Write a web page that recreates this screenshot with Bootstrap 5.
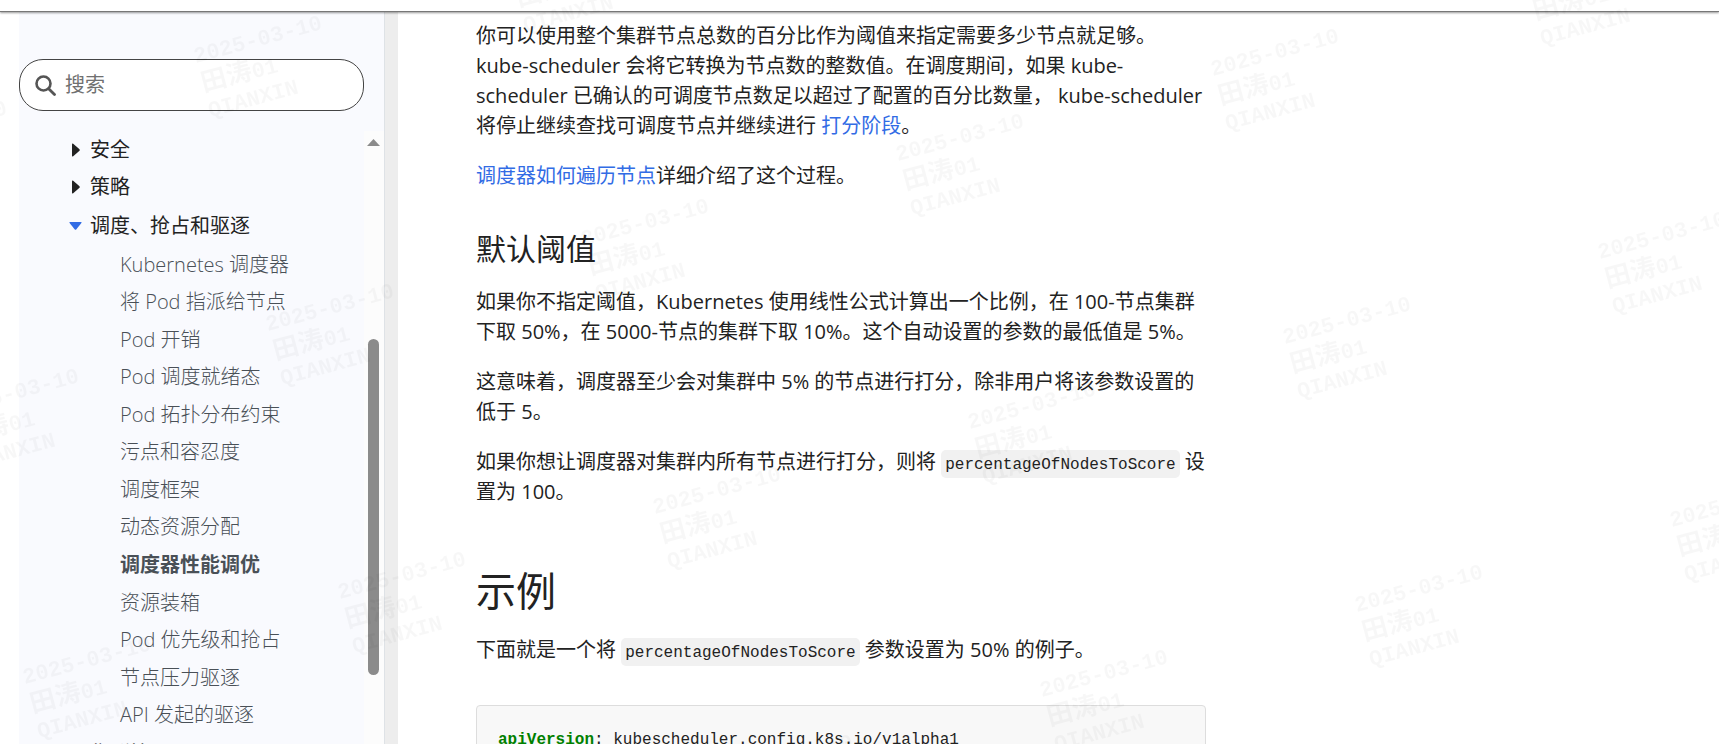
<!DOCTYPE html>
<html lang="zh-CN">
<head>
<meta charset="utf-8">
<meta name="viewport" content="width=device-width, initial-scale=1">
<title>调度器性能调优 | Kubernetes</title>
<link href="https://cdn.jsdelivr.net/npm/bootstrap@5.3.0/dist/css/bootstrap.min.css" rel="stylesheet">
<style>
  body { font-family: "Open Sans", "Noto Sans CJK SC", sans-serif; font-size: 20px; line-height: 30px; color: #222; background: #fff; }
  a { color: #326ce5; text-decoration: none; }
  .top-strip { height: 12px; background: #fff; border-bottom: 1px solid #777; box-shadow: 0 1px 2px rgba(0,0,0,.4); z-index: 2; }
  .side { width: 366px; margin-left: 19px; background: #f9fafe; border-right: 1px solid #dee2e6; padding-top: 47px; }
  .gutter { width: 13px; background: #ededed; }
  .search-box { height: 52px; margin-right: 20px; padding: 0 15px; gap: 9px; background: #fff; border: 1px solid #444; border-radius: 24px; }
  .search-box input { font-size: 20px; }
  .search-box input::placeholder { color: #707070; opacity: 1; }
  .tree { margin-top: 20px; padding: 0 0 0 53px; }
  .tree a { color: #222; }
  .tree-top { height: 37px; gap: 10px; }
  .tree-top svg { width: 8px; height: 14px; }
  .tree-top.opened { height: 41px; gap: 8px; }
  .tree-top.opened svg { width: 13px; height: 8px; margin-left: -3px; }
  .tree-sub { height: 488px; margin-bottom: 1px; padding-left: 48px; font-weight: 300; }
  .tree-sub a { color: #495057; }
  .scroll-rail { width: 20px; margin-top: 20px; padding: 8px 0 0 3px; background: #fcfcfc; }
  .scroll-thumb { width: 11px; height: 336px; margin: 193px 0 0 1px; background: #8b8b8b; border-radius: 6px; }
  .doc { padding: 9px 24px 0 78px; }
  .doc-body { max-width: 730px; }
  .doc-body p { margin-bottom: 20px; }
  .doc-body h2 { font-size: 40px; line-height: 48px; margin: 60px 0 20px; font-weight: 400; }
  .doc-body h3 { font-size: 30px; line-height: 36px; margin: 40px 0 20px; font-weight: 400; }
  .doc-body p code { font-family: "Liberation Mono", monospace; font-size: 16px; line-height: 16px; color: #222; background: #f1f1f1; padding: 6px 4px 4px; border-radius: 5px; }
  .doc-body pre { font-family: "Liberation Mono", monospace; font-size: 16px; line-height: 24px; margin-top: 40px; padding: 22px 21px; background: #f8f8f8; border: 1px solid #ddd; border-radius: 4px; color: #222; }
  .key { color: green; font-weight: 700; }
  .wm-layer { position: fixed; inset: 0; pointer-events: none; z-index: 5; }
  .wm { position: absolute; transform: rotate(-15deg); transform-origin: 0 20px; font: bold 22px/28px "Liberation Mono", "Noto Sans CJK SC", monospace; color: rgba(0,0,0,.03); white-space: nowrap; }
  .wm div { height: 28px; }
  .wm .han { font-size: 26px; }
</style>
</head>
<body>
<div class="d-flex flex-column vh-100 overflow-hidden">
  <header class="top-strip flex-shrink-0 position-relative"></header>
  <div class="d-flex flex-grow-1 overflow-hidden">
    <aside class="side flex-shrink-0 d-flex flex-column overflow-hidden">
      <form class="search-box d-flex align-items-center flex-shrink-0" role="search">
        <svg class="flex-shrink-0" width="21" height="21" viewBox="0 0 21 21" fill="none" stroke="#555" aria-hidden="true"><circle cx="8.5" cy="8.5" r="7" stroke-width="2.6"/><path d="M13.7 13.7l5.8 5.8" stroke-width="2.8" stroke-linecap="round"/></svg>
        <input class="form-control border-0 bg-transparent shadow-none p-0" type="search" placeholder="搜索" aria-label="搜索">
      </form>
      <div class="d-flex flex-grow-1 overflow-hidden">
        <nav class="tree flex-grow-1" aria-label="文档">
          <div class="tree-top d-flex align-items-center"><svg viewBox="0 0 8 14" fill="#222"><path d="M0 1.2Q0 0 1.2.8L7.5 6.3Q8 7 7.5 7.7L1.2 13.2Q0 14 0 12.8z"/></svg><a href="#">安全</a></div>
          <div class="tree-top d-flex align-items-center"><svg viewBox="0 0 8 14" fill="#222"><path d="M0 1.2Q0 0 1.2.8L7.5 6.3Q8 7 7.5 7.7L1.2 13.2Q0 14 0 12.8z"/></svg><a href="#">策略</a></div>
          <div class="tree-top opened d-flex align-items-center"><svg viewBox="0 0 13 8" fill="#326ce5"><path d="M1 0H12Q13 0 12.4 1L7.2 7.5Q6.5 8 5.8 7.5L.6 1Q0 0 1 0z"/></svg><a href="#">调度、抢占和驱逐</a></div>
          <ul class="tree-sub list-unstyled d-flex flex-column">
            <li class="flex-fill d-flex align-items-center"><a href="#">Kubernetes 调度器</a></li>
            <li class="flex-fill d-flex align-items-center"><a href="#">将 Pod 指派给节点</a></li>
            <li class="flex-fill d-flex align-items-center"><a href="#">Pod 开销</a></li>
            <li class="flex-fill d-flex align-items-center"><a href="#">Pod 调度就绪态</a></li>
            <li class="flex-fill d-flex align-items-center"><a href="#">Pod 拓扑分布约束</a></li>
            <li class="flex-fill d-flex align-items-center"><a href="#">污点和容忍度</a></li>
            <li class="flex-fill d-flex align-items-center"><a href="#">调度框架</a></li>
            <li class="flex-fill d-flex align-items-center"><a href="#">动态资源分配</a></li>
            <li class="flex-fill d-flex align-items-center"><a href="#" class="fw-bold" aria-current="page">调度器性能调优</a></li>
            <li class="flex-fill d-flex align-items-center"><a href="#">资源装箱</a></li>
            <li class="flex-fill d-flex align-items-center"><a href="#">Pod 优先级和抢占</a></li>
            <li class="flex-fill d-flex align-items-center"><a href="#">节点压力驱逐</a></li>
            <li class="flex-fill d-flex align-items-center"><a href="#">API 发起的驱逐</a></li>
          </ul>
          <div class="tree-top d-flex align-items-center"><svg viewBox="0 0 8 14" fill="#222"><path d="M0 1.2Q0 0 1.2.8L7.5 6.3Q8 7 7.5 7.7L1.2 13.2Q0 14 0 12.8z"/></svg><a href="#">集群管理</a></div>
        </nav>
        <div class="scroll-rail flex-shrink-0" aria-hidden="true">
          <svg class="d-block" width="13" height="7" viewBox="0 0 13 7" fill="#8b8b8b"><path d="M6.5 0L13 7H0z"/></svg>
          <div class="scroll-thumb"></div>
        </div>
      </div>
    </aside>
    <div class="gutter flex-shrink-0"></div>
    <main class="doc flex-grow-1">
      <article class="doc-body">
        <p>你可以使用整个集群节点总数的百分比作为阈值来指定需要多少节点就足够。 kube-scheduler 会将它转换为节点数的整数值。在调度期间，如果 kube-scheduler 已确认的可调度节点数足以超过了配置的百分比数量， kube-scheduler 将停止继续查找可调度节点并继续进行 <a href="#">打分阶段</a>。</p>
        <p><a href="#">调度器如何遍历节点</a>详细介绍了这个过程。</p>
        <h3>默认阈值</h3>
        <p>如果你不指定阈值，Kubernetes 使用线性公式计算出一个比例，在 100-节点集群下取 50%，在 5000-节点的集群下取 10%。这个自动设置的参数的最低值是 5%。</p>
        <p>这意味着，调度器至少会对集群中 5% 的节点进行打分，除非用户将该参数设置的低于 5。</p>
        <p>如果你想让调度器对集群内所有节点进行打分，则将 <code>percentageOfNodesToScore</code> 设置为 100。</p>
        <h2>示例</h2>
        <p>下面就是一个将 <code>percentageOfNodesToScore</code> 参数设置为 50% 的例子。</p>
        <pre><span class="key">apiVersion</span>: kubescheduler.config.k8s.io/v1alpha1
</pre>
      </article>
    </main>
  </div>
</div>
<div class="wm-layer overflow-hidden" aria-hidden="true"></div>
<script src="https://cdn.jsdelivr.net/npm/bootstrap@5.3.0/dist/js/bootstrap.bundle.min.js"></script>
<script>
  // Tile the watermark over the window on a grid tilted by 15 degrees
  const layer = document.querySelector('.wm-layer');
  const w = innerWidth, h = innerHeight;
  for (let row = -12; row <= 12; row++) {
    for (let col = -12; col <= 12; col++) {
      const x = 898 + col * 315 + row * 72, y = 142 - col * 85 + row * 268;
      if (x < -140 || x > w || y < -100 || y > h + 40) continue;
      const mark = document.createElement('div');
      mark.className = 'wm';
      mark.style.left = x + 'px';
      mark.style.top = y + 'px';
      mark.innerHTML = '<div>2025-03-10</div><div><span class="han">田涛</span>01</div><div>QIANXIN</div>';
      layer.append(mark);
    }
  }
</script>
</body>
</html>
